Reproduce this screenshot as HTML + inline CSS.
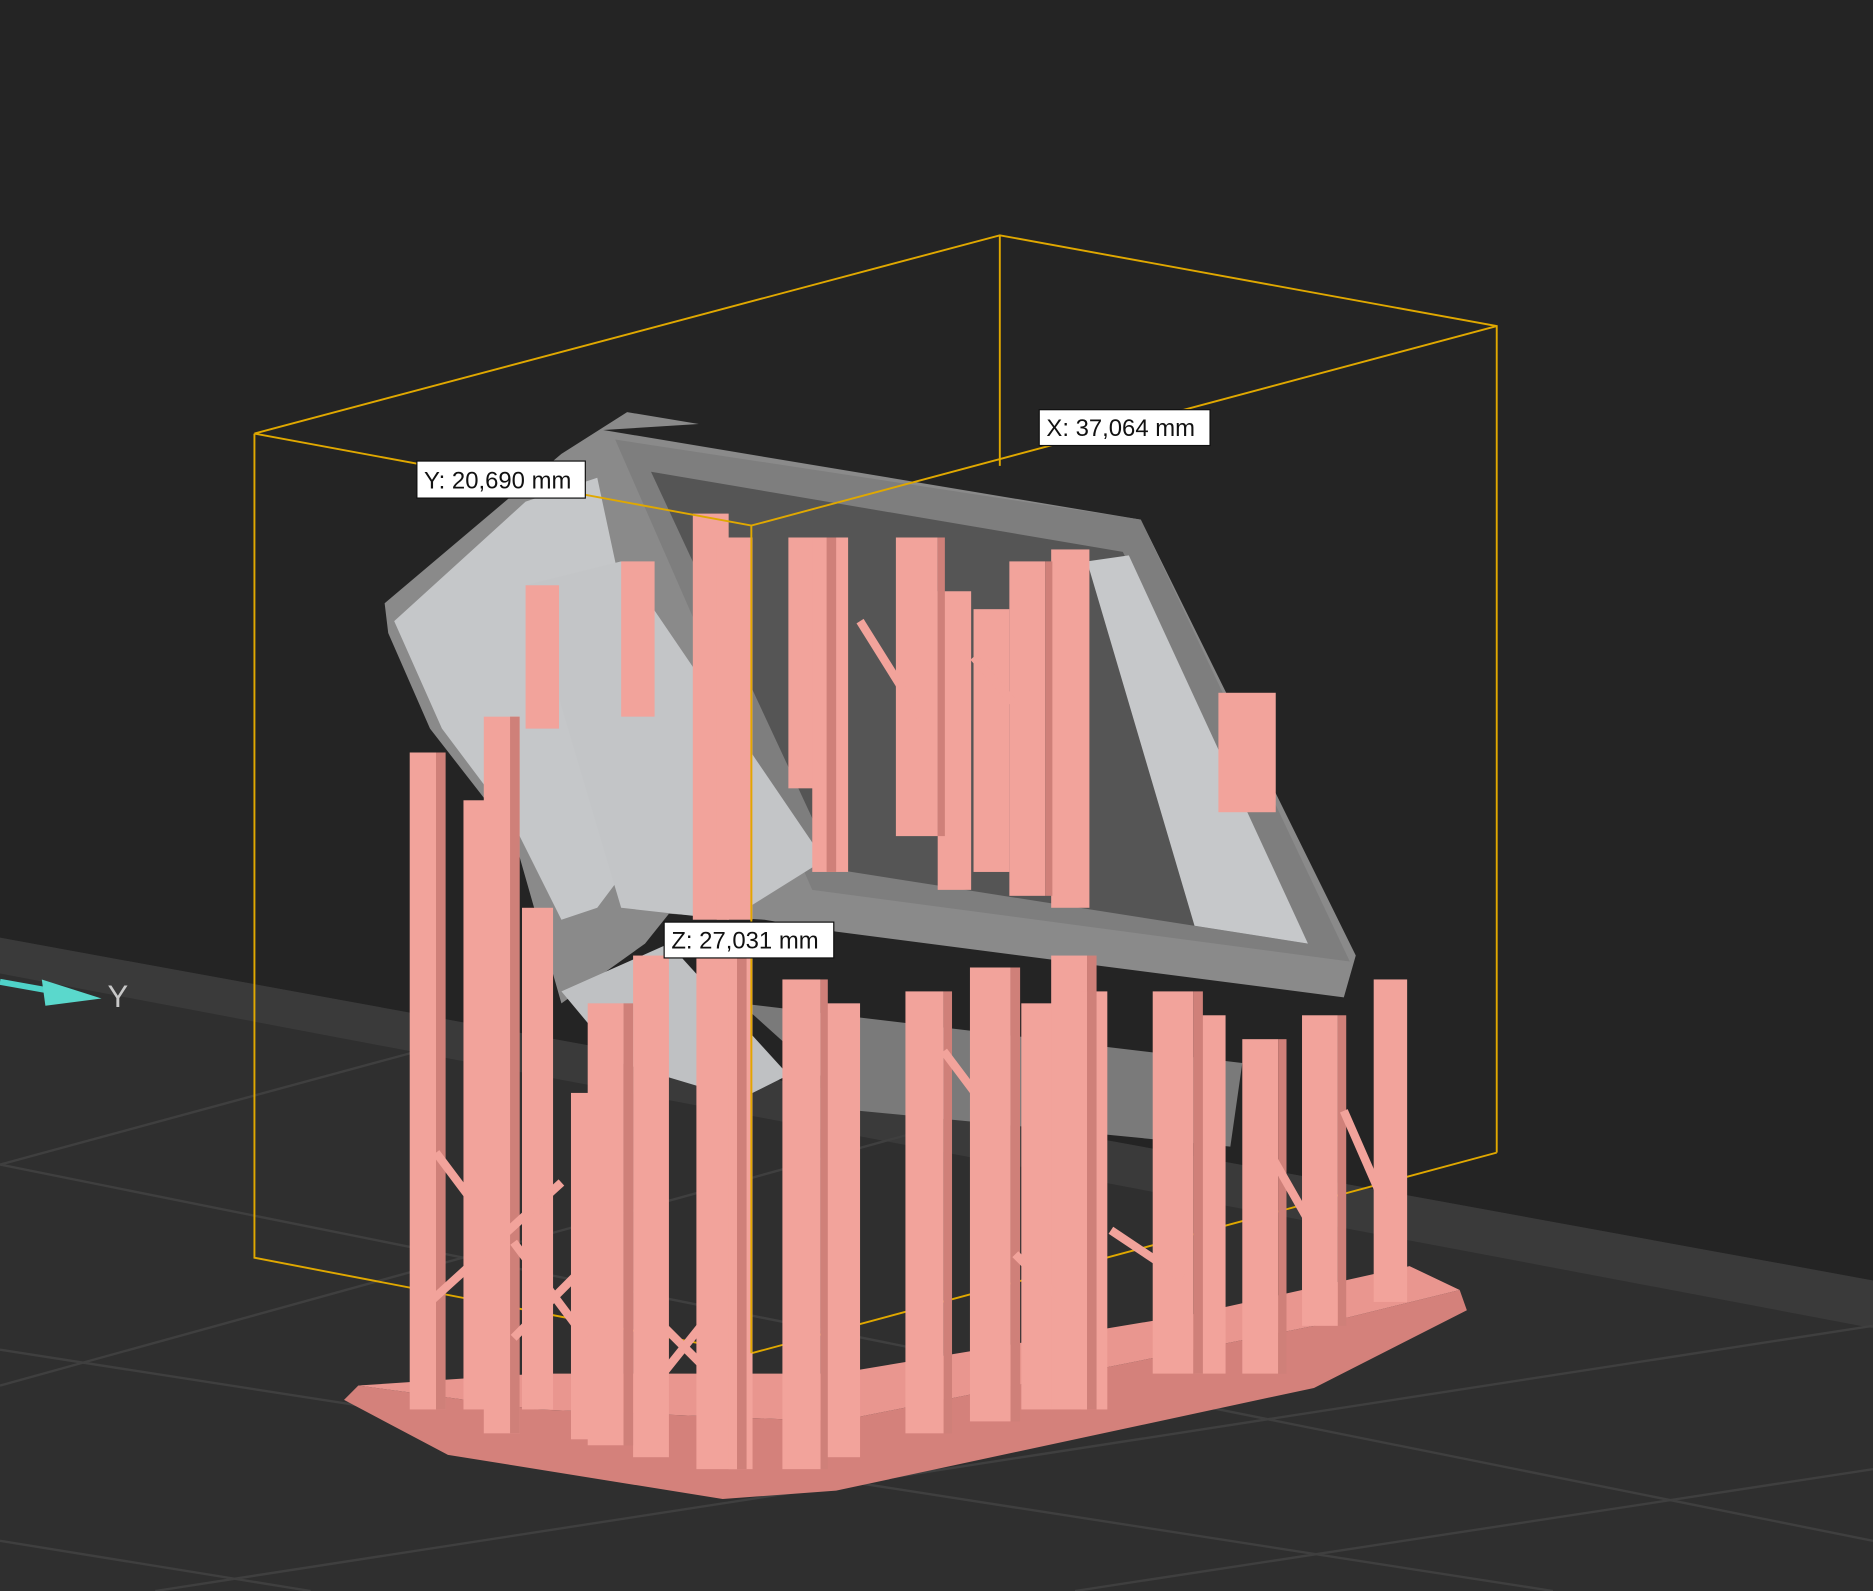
<!DOCTYPE html>
<html><head><meta charset="utf-8"><style>
html,body{margin:0;padding:0;background:#242424;overflow:hidden}
svg{display:block}
</style></head><body>
<svg width="1873" height="1591" viewBox="0 0 1568 1332" preserveAspectRatio="none" xmlns="http://www.w3.org/2000/svg">
<rect width="1568" height="1332" fill="#242424"/>
<!-- floor -->
<polygon points="0,785 1568,1072 1568,1332 0,1332" fill="#2f2f2f"/>
<polygon points="0,785 1568,1072 1568,1112 0,815" fill="#3a3a3a"/>
<g stroke="#3f3f3f" stroke-width="2" fill="none">
<line x1="0" y1="975" x2="1568" y2="1290"/>
<line x1="0" y1="1130" x2="1300" y2="1332"/>
<line x1="0" y1="975" x2="350" y2="880"/>
<line x1="0" y1="1160" x2="760" y2="950"/>
<line x1="130" y1="1332" x2="1568" y2="1110"/>
<line x1="900" y1="1332" x2="1568" y2="1230"/>
<line x1="0" y1="1290" x2="260" y2="1332"/>
</g>
<!-- axis arrow -->
<line x1="0" y1="822" x2="45" y2="830" stroke="#4fd2c8" stroke-width="5"/>
<polygon points="35,820 85,836 38,842" fill="#5ad8cc"/>
<text x="90" y="843" fill="#c8c8c8" font-family="Liberation Sans, sans-serif" font-size="26">Y</text>
<!-- back bbox lines -->
<g stroke="#e0a800" stroke-width="1.6" fill="none">
<polyline points="213,363 837,197 1253,273 1253,965"/>
<line x1="837" y1="197" x2="837" y2="390"/>
<polyline points="213,363 213,1053 629,1133 1253,965"/>
</g>
<!-- base plate -->
<polygon points="288,1172 375,1218 605,1255 700,1248 1100,1162 1228,1097 1222,1080 1100,1110 700,1190 450,1180 300,1160" fill="#d4817b"/>
<polygon points="300,1160 450,1180 700,1190 1100,1110 1222,1080 1180,1060 1000,1100 700,1150 450,1150" fill="#e9968f"/>
<!-- grey object -->
<polygon points="322,505 470,380 525,345 585,355 505,360 955,435 1135,800 1125,835 700,780 640,770 560,765 540,790 470,840 430,700 360,610 325,530" fill="#8a8a8a"/>
<polygon points="330,520 440,420 500,400 560,680 500,760 470,770 430,690 370,610" fill="#c5c7c9"/>
<polygon points="515,368 955,435 1130,805 680,745" fill="#7e7e7e"/>
<polygon points="545,395 940,462 1095,790 700,728" fill="#555555"/>
<polygon points="910,470 945,465 1095,790 1000,775" fill="#c6c8ca"/>
<polygon points="440,490 520,470 690,720 610,770 520,760" fill="#c3c5c7"/>
<polygon points="470,830 560,790 660,900 620,920 520,890" fill="#bfc1c3"/>
<polygon points="620,840 1040,890 1030,960 720,930" fill="#7a7a7a"/>
<!-- supports -->
<g fill="#f2a39b">
<rect x="343" y="630" width="30" height="550"/>
<rect x="388" y="670" width="28" height="510"/>
<rect x="405" y="600" width="30" height="600"/>
<rect x="437" y="760" width="26" height="420"/>
<rect x="478" y="915" width="28" height="290"/>
<rect x="492" y="840" width="30" height="370"/>
<rect x="530" y="800" width="30" height="420"/>
<rect x="583" y="800" width="34" height="430"/>
<rect x="610" y="790" width="20" height="440"/>
<rect x="655" y="820" width="32" height="410"/>
<rect x="690" y="840" width="30" height="380"/>
<rect x="758" y="830" width="32" height="370"/>
<rect x="812" y="810" width="34" height="380"/>
<rect x="855" y="840" width="26" height="340"/>
<rect x="880" y="800" width="30" height="380"/>
<rect x="905" y="830" width="22" height="350"/>
<rect x="965" y="830" width="34" height="320"/>
<rect x="1000" y="850" width="26" height="300"/>
<rect x="1040" y="870" width="30" height="280"/>
<rect x="1090" y="850" width="30" height="260"/>
<rect x="1150" y="820" width="28" height="270"/>
<rect x="1020" y="580" width="48" height="100"/>
<rect x="580" y="430" width="30" height="340"/>
<rect x="600" y="450" width="30" height="320"/>
<rect x="660" y="450" width="32" height="210"/>
<rect x="680" y="450" width="30" height="280"/>
<rect x="750" y="450" width="35" height="250"/>
<rect x="785" y="495" width="28" height="250"/>
<rect x="815" y="510" width="30" height="220"/>
<rect x="845" y="470" width="30" height="280"/>
<rect x="880" y="460" width="32" height="300"/>
<rect x="440" y="490" width="28" height="120"/>
<rect x="520" y="470" width="28" height="130"/>
</g>
<g fill="#cf8079">
<rect x="365" y="630" width="8" height="550"/>
<rect x="427" y="600" width="8" height="600"/>
<rect x="522" y="840" width="8" height="370"/>
<rect x="617" y="800" width="8" height="430"/>
<rect x="687" y="820" width="6" height="410"/>
<rect x="790" y="830" width="7" height="370"/>
<rect x="846" y="810" width="8" height="380"/>
<rect x="910" y="800" width="8" height="380"/>
<rect x="999" y="830" width="8" height="320"/>
<rect x="1070" y="870" width="7" height="280"/>
<rect x="1120" y="850" width="7" height="260"/>
<rect x="692" y="450" width="8" height="280"/>
<rect x="785" y="450" width="6" height="250"/>
<rect x="875" y="470" width="6" height="280"/>
</g>
<g stroke="#f2a39b" stroke-width="7">
<line x1="365" y1="965" x2="395" y2="1005"/><line x1="360" y1="1090" x2="470" y2="990"/>
<line x1="430" y1="1040" x2="490" y2="1120"/><line x1="430" y1="1120" x2="490" y2="1060"/>
<line x1="555" y1="1110" x2="595" y2="1150"/><line x1="555" y1="1150" x2="595" y2="1100"/>
<line x1="790" y1="880" x2="820" y2="920"/><line x1="850" y1="1050" x2="900" y2="1100"/>
<line x1="930" y1="1030" x2="990" y2="1070"/><line x1="1060" y1="960" x2="1100" y2="1030"/>
<line x1="1125" y1="930" x2="1160" y2="1010"/><line x1="720" y1="520" x2="770" y2="600"/>
<line x1="815" y1="550" x2="850" y2="590"/>
</g>
<!-- front bbox lines -->
<g stroke="#e0a800" stroke-width="1.6" fill="none">
<polyline points="213,363 629,440 1253,273"/>
<line x1="629" y1="440" x2="629" y2="1133"/>
</g>
<!-- labels -->
<g font-family="Liberation Sans, sans-serif" font-size="20" fill="#111">
<rect x="349" y="386" width="141" height="31" fill="#fff" stroke="#111"/>
<text x="355" y="409">Y: 20,690 mm</text>
<rect x="870" y="343" width="143" height="30" fill="#fff" stroke="#111"/>
<text x="876" y="365">X: 37,064 mm</text>
<rect x="556" y="772" width="142" height="30" fill="#fff" stroke="#111"/>
<text x="562" y="794">Z: 27,031 mm</text>
</g>
</svg>
</body></html>
